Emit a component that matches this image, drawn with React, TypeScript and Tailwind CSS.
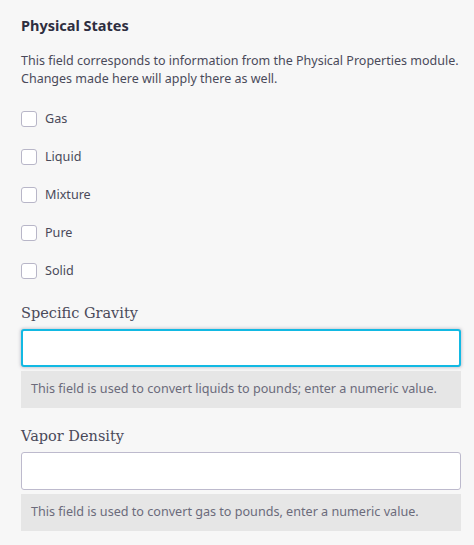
import React from 'react';

const states = ['Gas', 'Liquid', 'Mixture', 'Pure', 'Solid'];

const sans = { fontFamily: '"Noto Sans", "Open Sans", sans-serif' };

const Field = ({ label, hint, focused }: { label: string; hint: string; focused?: boolean }) => (
  <div>
    <div className="text-[14.5px] leading-[22px] text-[#4a4a5a]" style={{ fontFamily: '"DejaVu Serif", "Liberation Serif", serif' }}>
      {label}
    </div>
    <input
      className={
        focused
          ? 'mt-[5px] block w-full h-[38px] bg-white rounded-[3px] border-2 border-[#12b9e3] shadow-[0_0_3px_1px_rgba(120,120,140,0.35)] outline-none'
          : 'mt-[5px] block w-full h-[38px] bg-white rounded-[3px] border border-[#bdbacd] outline-none'
      }
    />
    <div className="mt-[4px] h-[37px] bg-[#e6e6e6] px-[10px] flex items-center text-[12.6px] text-[#6b6b7b]" style={sans}>
      {hint}
    </div>
  </div>
);

export default function App() {
  return (
    <div className="w-[474px] h-[545px] bg-[#f7f7f7] pl-[21px] pr-[13px] pt-[14px] overflow-hidden" style={sans}>
      <h2 className="text-[14.5px] leading-[22px] font-bold text-[#2e2e40]">Physical States</h2>
      <p className="mt-[16px] w-[446px] text-[12.5px] leading-[18px] text-[#4a4a5a]">
        This field corresponds to information from the Physical Properties module. Changes made here will apply there as well.
      </p>
      <div className="mt-[23px] flex flex-col gap-[22px]">
        {states.map((s) => (
          <label key={s} className="flex items-center h-[16px] gap-[8px]">
            <span className="w-[16px] h-[16px] rounded-[3px] border border-[#b8b6c8] bg-white" />
            <span className="text-[12.6px] text-[#4a4a5a]">{s}</span>
          </label>
        ))}
      </div>
      <div className="mt-[23px] flex flex-col gap-[17px]">
        <Field
          label="Specific Gravity"
          hint="This field is used to convert liquids to pounds; enter a numeric value."
          focused
        />
        <Field label="Vapor Density" hint="This field is used to convert gas to pounds, enter a numeric value." />
      </div>
    </div>
  );
}
